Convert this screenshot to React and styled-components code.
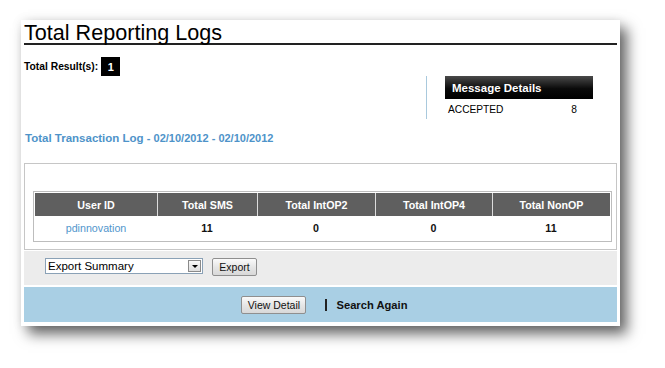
import React from "react";
import styled, { createGlobalStyle } from "styled-components";

const Global = createGlobalStyle`
  html, body { margin: 0; padding: 0; background: #fff; }
  body { font-family: Arial, "Liberation Sans", sans-serif; color: #000; }
`;

const Page = styled.div`
  padding: 20px 0 0 21px;
  width: 665px;
  height: 368px;
  box-sizing: border-box;
  overflow: hidden;
`;

const Card = styled.div`
  width: 599px;
  box-sizing: border-box;
  padding: 3px 3px 4px 3px;
  background: #fff;
  box-shadow: 7px 8px 13px rgba(0, 0, 0, 0.6), 0 0 10px rgba(0, 0, 0, 0.08);
`;

const Title = styled.h1`
  margin: 0;
  font-size: 21.6px;
  font-weight: normal;
  line-height: 20px;
  border-bottom: 2px solid #222;
  color: #000;
`;

const ResultRow = styled.div`
  display: flex;
  align-items: center;
  gap: 3px;
  margin-top: 12px;
  height: 19px;
`;

const Label = styled.span`
  font-size: 10.3px;
  font-weight: bold;
`;

const Badge = styled.span`
  display: flex;
  align-items: center;
  justify-content: center;
  width: 19px;
  height: 19px;
  background: #000;
  color: #fff;
  font-weight: bold;
  font-size: 11px;
`;

const PanelRow = styled.div`
  display: flex;
  justify-content: flex-end;
  padding-right: 24px;
`;

const Panel = styled.div`
  border-left: 1px solid #a9c9dd;
  padding-left: 18px;
  width: 148px;
`;

const PanelHead = styled.div`
  height: 23px;
  display: flex;
  align-items: center;
  padding-left: 7px;
  background: linear-gradient(#4a4a4a, #0a0a0a 55%, #000);
  color: #fff;
  font-size: 11.5px;
  font-weight: bold;
`;

const PanelItem = styled.div`
  height: 20px;
  display: flex;
  align-items: center;
  justify-content: space-between;
  padding: 0 16px 0 3px;
  font-size: 10.2px;
`;

const SectionTitle = styled.div`
  margin-top: 12px;
  line-height: 14px;
  padding-left: 1px;
  color: #4e93c9;
  font-weight: bold;
  font-size: 11.5px;
`;

const DateRange = styled.span`
  font-size: 11px;
`;

const TableBox = styled.div`
  margin-top: 18px;
  border: 1px solid #c6c6c6;
  padding: 27px 7px 7px 8px;
`;

const Table = styled.table`
  width: 100%;
  border-collapse: separate;
  border-spacing: 0;
  border: 1px solid #bdbdbd;
  padding: 1px;
  table-layout: fixed;
`;

const Th = styled.th`
  height: 23px;
  padding: 0;
  background: #5f5f5f;
  color: #fff;
  font-size: 10.7px;
  font-weight: bold;
  text-align: center;
  border-left: 1px solid #dcdcdc;
  &:first-child { border-left: none; }
`;

const Td = styled.td`
  height: 24px;
  padding: 0;
  text-align: center;
  font-size: 10.7px;
  font-weight: ${(p) => (p.$link ? "normal" : "bold")};
  color: ${(p) => (p.$link ? "#5296cc" : "#111")};
`;

const ExportBar = styled.div`
  margin-top: 1px;
  height: 34px;
  box-sizing: border-box;
  padding: 7px 0 0 21px;
  background: #ececec;
  display: flex;
  align-items: flex-start;
  gap: 9px;
`;

const Select = styled.div`
  width: 158px;
  height: 16px;
  box-sizing: border-box;
  border: 1px solid #8aa1b6;
  background: #fff;
  display: flex;
  align-items: center;
  justify-content: space-between;
  padding-left: 2px;
  font-size: 11.5px;
  color: #000;
`;

const SelectArrow = styled.span`
  width: 13px;
  height: 12px;
  margin-right: 1px;
  box-sizing: border-box;
  border: 1px solid #8a8a8a;
  background: linear-gradient(#f8f8f8, #dedede);
  display: flex;
  align-items: center;
  justify-content: center;
  &::after {
    content: "";
    border-left: 3px solid transparent;
    border-right: 3px solid transparent;
    border-top: 3px solid #000;
  }
`;

const Button = styled.button`
  height: 18px;
  width: ${(p) => p.$w}px;
  padding: 0;
  border: 1px solid #8f8f8f;
  border-radius: 2px;
  background: linear-gradient(#fafafa, #e6e6e6 50%, #d8d8d8);
  font-family: Arial, "Liberation Sans", sans-serif;
  font-size: 10.5px;
  color: #111;
`;

const ActionBar = styled.div`
  margin-top: 2px;
  height: 35px;
  background: #a9cfe4;
  display: flex;
  align-items: center;
  justify-content: center;
  padding-left: 8px;
`;

const Divider = styled.span`
  width: 2px;
  height: 12px;
  background: #222;
  margin: 0 9px 0 19px;
`;

const ActionText = styled.span`
  font-size: 11.2px;
  font-weight: bold;
  color: #111;
`;

const columns = ["User ID", "Total SMS", "Total IntOP2", "Total IntOP4", "Total NonOP"];
const widths = [122, 100, 118, 117, 118];

export default function App() {
  return (
    <Page>
      <Global />
      <Card>
        <Title>Total Reporting Logs</Title>
        <ResultRow>
          <Label>Total Result(s):</Label>
          <Badge>1</Badge>
        </ResultRow>
        <PanelRow>
          <Panel>
            <PanelHead>Message Details</PanelHead>
            <PanelItem>
              <span>ACCEPTED</span>
              <span>8</span>
            </PanelItem>
          </Panel>
        </PanelRow>
        <SectionTitle>
          Total Transaction Log <DateRange>- 02/10/2012 - 02/10/2012</DateRange>
        </SectionTitle>
        <TableBox>
          <Table>
            <colgroup>
              {widths.map((w, i) => (
                <col key={i} style={{ width: w }} />
              ))}
            </colgroup>
            <thead>
              <tr>
                {columns.map((c) => (
                  <Th key={c}>{c}</Th>
                ))}
              </tr>
            </thead>
            <tbody>
              <tr>
                <Td $link>pdinnovation</Td>
                <Td>11</Td>
                <Td>0</Td>
                <Td>0</Td>
                <Td>11</Td>
              </tr>
            </tbody>
          </Table>
        </TableBox>
        <ExportBar>
          <Select>
            <span>Export Summary</span>
            <SelectArrow />
          </Select>
          <Button $w={45}>Export</Button>
        </ExportBar>
        <ActionBar>
          <Button $w={65}>View Detail</Button>
          <Divider />
          <ActionText>Search Again</ActionText>
        </ActionBar>
      </Card>
    </Page>
  );
}
